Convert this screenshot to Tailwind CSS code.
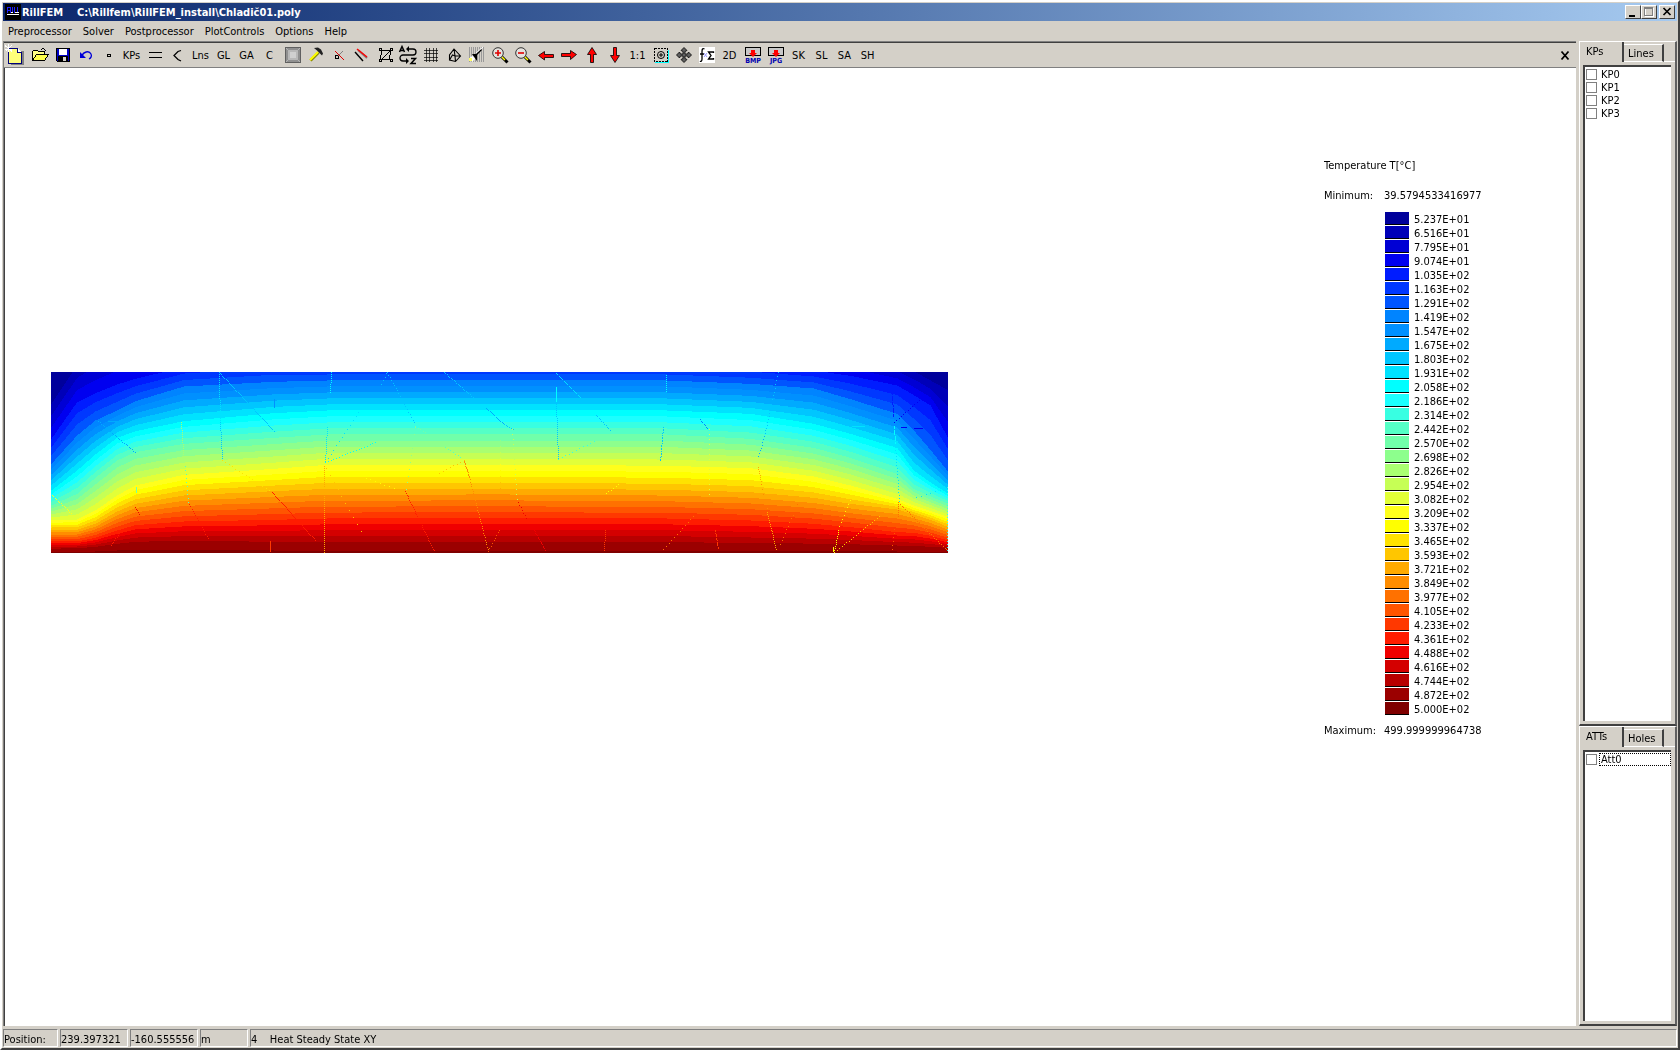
<!DOCTYPE html>
<html lang="en">
<head>
<meta charset="utf-8">
<title>RillFEM</title>
<script src="https://cdn.jsdelivr.net/npm/@tailwindcss/browser@4"></script>
</head>
<body class="h-screen overflow-hidden bg-[#d4d0c8] font-['DejaVu_Sans_Condensed','DejaVu_Sans',sans-serif] text-[11px] leading-[13px] text-black">
<div class="flex h-full flex-col border-2 border-t-white border-l-white border-r-[#404040] border-b-[#404040] p-px">

  <header class="flex h-[18px] shrink-0 items-center bg-linear-to-r from-[#0a246a] to-[#a6caf0] pr-[2px] pl-[2px] text-white">
    <svg class="h-4 w-4 shrink-0" viewBox="0 0 16 16" shape-rendering="crispEdges"><path fill="#000" d="M0 0h16v16H0z"/><path fill="none" stroke="#2020ff" d="M2.500 9V3.500h3V6h-3M5.500 6v3M7.500 3v6M9.500 3v6M12.500 3v6"/><path stroke="#fff" d="M2 10.500h12M6 8.500h2M10 8.500h4"/></svg>
    <h1 class="ml-px flex-1 font-bold whitespace-pre">RillFEM    C:\Rillfem\RillFEM_install\Chladič01.poly</h1>
    <div class="flex h-[14px]">
      <button aria-label="Minimize" class="w-4 border border-t-white border-l-white border-r-[#404040] border-b-[#404040] bg-[#d4d0c8]"><svg class="block h-3 w-[14px]" viewBox="0 0 14 12"><path d="M3 9h6v2H3z"/></svg></button>
      <button aria-label="Maximize" class="w-4 border border-t-white border-l-white border-r-[#404040] border-b-[#404040] bg-[#d4d0c8]"><svg class="block h-3 w-[14px]" viewBox="0 0 14 12" shape-rendering="crispEdges"><path fill="none" stroke="#fff" d="M3.500 2.500h8v8h-8z"/><path fill="none" stroke="#808080" d="M2.500 1.500h8v8h-8zM2 2.500h9"/></svg></button>
      <button aria-label="Close" class="ml-[2px] w-4 border border-t-white border-l-white border-r-[#404040] border-b-[#404040] bg-[#d4d0c8]"><svg class="block h-3 w-[14px]" viewBox="0 0 14 12"><path stroke="#000" stroke-width="1.700" d="M3.500 2l7 7M10.500 2l-7 7"/></svg></button>
    </div>
  </header>

  <nav class="flex h-5 shrink-0 items-center gap-[11px] pl-[5px]">
    <button>Preprocessor</button><button>Solver</button><button>Postprocessor</button><button>PlotControls</button><button>Options</button><button>Help</button>
  </nav>

  <div class="flex min-h-0 flex-1">
    <main class="flex min-w-0 flex-1 flex-col border-t border-l border-t-[#808080] border-l-[#808080] bg-white">
      <div class="flex h-[26px] shrink-0 items-center border-t border-b border-t-[#404040] border-b-[#808080] bg-[#d4d0c8] pl-px [&>button]:flex [&>button]:h-[23px] [&>button]:w-[23px] [&>button]:shrink-0 [&>button]:items-center [&>button]:justify-center [&_svg]:h-5 [&_svg]:w-5 [&_svg]:shrink-0 [&_svg]:overflow-visible">
        <button aria-label="New"><svg viewBox="0 0 20 20" shape-rendering="crispEdges"><path fill="#808080" d="M4 6h13v14H4z"/><path fill="#ffff7a" stroke="#00007b" d="M1.500 3.500h9l4 4v11h-13z"/><path fill="#fff" stroke="#00007b" d="M10.500 3.500v4h4"/><path stroke="#fff" d="M-2 .5l7 6M1.500-1v8M-2 4.500h7M5 0l-6 6"/></svg></button>
        <button aria-label="Open"><svg viewBox="0 0 20 20" shape-rendering="crispEdges"><path fill="#ffff84" stroke="#000" d="M2.500 15.500v-9l1-1h4l1 1h6v3"/><path fill="#ffff4a" stroke="#000" d="M2.500 15.500l4-6h12l-4 6z"/><path fill="none" stroke="#000" d="M11 4.500l2-1 3 2"/></svg></button>
        <button aria-label="Save"><svg viewBox="0 0 20 20" shape-rendering="crispEdges"><path fill="#0000c8" stroke="#000" d="M3.500 3.500h13v13h-12l-1-1z"/><path fill="#fff" d="M6 4h8v6H6z"/><path fill="#000" d="M5 11h10v5H5z"/><path fill="#d4d0c8" d="M10 12h3v4h-3z"/></svg></button>
        <button aria-label="Undo"><svg viewBox="0 0 20 20"><path fill="none" stroke="#0000d8" stroke-width="1.300" d="M6 11c1-4 7-6 9-2 1 2 0 4-2 5"/><path fill="#0000d8" d="M4 7v6h6z"/></svg></button>
        <button aria-label="Keypoint"><svg viewBox="0 0 20 20" shape-rendering="crispEdges"><path fill="none" stroke="#000" d="M8.500 9.500h3v2h-3z"/></svg></button>
        <button>KPs</button>
        <button aria-label="Parallel lines"><svg viewBox="0 0 20 20" shape-rendering="crispEdges"><path stroke="#000" d="M4 7.500h13M4 12.500h13"/></svg></button>
        <button aria-label="Angle"><svg viewBox="0 0 20 20"><path fill="none" stroke="#000" stroke-width="1.300" d="M13 5.500l-3 1-4 4 4 4 3 1.500"/></svg></button>
        <button>Lns</button>
        <button>GL</button>
        <button>GA</button>
        <button>C</button>
        <button aria-label="Area"><svg viewBox="0 0 20 20" shape-rendering="crispEdges"><path fill="#606060" d="M2 2h16v16H2z"/><path fill="#909090" d="M3 3h14v14H3z"/><path fill="#b8b8b8" d="M5 5h10v10H5z"/><path fill="#d0d0d0" d="M7 7h6v6H7z"/><path stroke="#b4b4b4" d="M3 3l3 3M17 3l-3 3M3 17l3-3M17 17l-3-3"/></svg></button>
        <button aria-label="Build"><svg viewBox="0 0 20 20"><path stroke="#888800" stroke-width="3" d="M4.500 15.500l8-8"/><path stroke="#ff0" stroke-width="2" d="M4 15l8-8"/><path fill="#222" d="M8 3l4-.5 3 2 2 4-1 2-3-3-2-2z"/></svg></button>
        <button aria-label="Delete keypoint"><svg viewBox="0 0 20 20"><path fill="none" stroke="#000" shape-rendering="crispEdges" d="M6.500 10.500h3v3h-3z"/><path stroke="#e00000" d="M6 6l9 9"/><path stroke="#808080" d="M14 6l-5 5"/></svg></button>
        <button aria-label="Delete line"><svg viewBox="0 0 20 20"><path stroke="#808080" stroke-width="2" d="M6 5l9 8"/><path stroke="#f00" stroke-width="1.500" d="M5 4l10 8"/><path stroke="#000" stroke-width="1.400" d="M3 7l8 9"/></svg></button>
        <button aria-label="Polygon"><svg viewBox="0 0 20 20" shape-rendering="crispEdges"><path fill="none" stroke="#000" d="M6.500 5.500h9l-1 9h-9zM6 15l9-9"/><path fill="#d4d0c8" stroke="#000" d="M4.500 3.500h2v2h-2zM15.500 3.500h2v2h-2zM4.500 14.500h2v2h-2zM15.500 14.500h2v2h-2z"/></svg></button>
        <button aria-label="Renumber"><svg viewBox="0 0 20 20"><path fill="none" stroke="#000" stroke-width="1.300" d="M9 4h6a3 3 0 0 1 0 6H5a2.500 2.500 0 0 0 0 6h5"/><path d="M8 4l3-3v6zM11 16l-3-3v6z"/><path fill="none" stroke="#000" stroke-width="1.500" d="M1.500 7L4 1.500 6.500 7M2 5.500h4M13 13.500h4.500L13 18.500h5"/></svg></button>
        <button aria-label="Grid"><svg viewBox="0 0 20 20"><path stroke="#000" stroke-width=".7" d="M5.500 3v14M8.500 3v14M12.500 3v14M15.500 3v14M3 5.500h14M3 8.500h14M3 12.500h14M3 15.500h14"/></svg></button>
        <button aria-label="Mesh"><svg viewBox="0 0 20 20"><path fill="none" stroke="#000" stroke-width="1.100" d="M10 4l-4.500 6v5l6 1.500L16.500 11zM10 4l1 7M5.500 15l3-5 2.500 1 5 0M11 11l.5 5.500"/></svg></button>
        <button aria-label="Clear plot"><svg viewBox="0 0 20 20"><path fill="none" stroke="#999" stroke-width="15" stroke-dasharray="1 1" d="M2 9.500h15"/><path d="M5 9h4l5-5 1 1-5 5v6z"/><path fill="#fff" d="M3 12l3-1 2 3-3 3z"/><path fill="#ff6" d="M2 13h3v3H2z"/><path stroke="#fff" d="M9 8l7-6"/></svg></button>
        <button aria-label="Zoom in"><svg viewBox="0 0 20 20"><path stroke="#000" stroke-width="3" d="M12 12l5.500 5.500"/><path stroke="#ff0" stroke-width="1.500" d="M12 12l3 3"/><circle cx="8" cy="8" r="5.300" fill="#e4e2de" stroke="#333"/><path stroke="#e00000" stroke-width="1.600" d="M5 8h6M8 5v6"/></svg></button>
        <button aria-label="Zoom out"><svg viewBox="0 0 20 20"><path stroke="#000" stroke-width="3" d="M12 12l5.500 5.500"/><path stroke="#ff0" stroke-width="1.500" d="M12 12l3 3"/><circle cx="8" cy="8" r="5.300" fill="#e4e2de" stroke="#333"/><path stroke="#e00000" stroke-width="1.600" d="M5 8h6"/></svg></button>
        <button aria-label="Pan left"><svg viewBox="0 0 20 20"><path fill="#f00" stroke="#000" stroke-width=".8" d="M2.500 10.500l6-4v3h9v3h-9v2.500z"/></svg></button>
        <button aria-label="Pan right"><svg viewBox="0 0 20 20"><path fill="#f00" stroke="#000" stroke-width=".8" d="M17.500 9.500l-6-4v3h-9v3h9v3z"/></svg></button>
        <button aria-label="Pan up"><svg viewBox="0 0 20 20"><path fill="#f00" stroke="#000" stroke-width=".8" d="M10 2.500l4.500 7h-3v8h-3v-8h-3z"/></svg></button>
        <button aria-label="Pan down"><svg viewBox="0 0 20 20"><path fill="#f00" stroke="#000" stroke-width=".8" d="M10 17.500l4.500-7h-3v-8h-3v8h-3z"/></svg></button>
        <button>1:1</button>
        <button aria-label="Fit"><svg viewBox="0 0 20 20"><path fill="none" stroke="#0ff" shape-rendering="crispEdges" d="M4 17.500h13.500V5"/><path fill="none" stroke="#000" stroke-dasharray="2 1" shape-rendering="crispEdges" d="M3.500 3.500h13v13h-13z"/><circle cx="10" cy="10" r="3.500" fill="none" stroke="#000"/><path stroke="#000" d="M8 10h4M10 8v4"/></svg></button>
        <button aria-label="Move"><svg viewBox="0 0 20 20"><path fill="#606060" stroke="#000" stroke-width=".8" d="M10 2.500l3 3-2 1v2.500h2.500l1-2 3 3-3 3-1-2H11v2.500l2 1-3 3-3-3 2-1V11H6.500l-1 2-3-3 3-3 1 2H9V6.500l-2-1z"/></svg></button>
        <button aria-label="Functions"><svg viewBox="0 0 20 20"><path fill="#fff" d="M2 2h16v16H2z"/><path fill="none" stroke="#000" stroke-width="1.300" d="M7.500 4c-2-1-2.500 0-2.500 3v7c0 2-1 3-2 2M3 9h4M16.500 8V7H11.500l2.500 3.500-2.500 3.500h5V13"/><path stroke="#99f" d="M7 8l3 4M10 8l-3 4"/></svg></button>
        <button>2D</button>
        <button aria-label="Export BMP"><svg viewBox="0 0 20 20"><path fill="#c8c8c8" stroke="#000" shape-rendering="crispEdges" d="M2.500 2.500h15v8h-15z"/><path fill="#f00" d="M8 5h4v3h2l-4 4-4-4h2z"/><text x="10" y="18" text-anchor="middle" font-size="7" font-weight="bold" fill="#0000b0">BMP</text></svg></button>
        <button aria-label="Export JPG"><svg viewBox="0 0 20 20"><path fill="#c8c8c8" stroke="#000" shape-rendering="crispEdges" d="M2.500 2.500h15v8h-15z"/><path fill="#f00" d="M8 5h4v3h2l-4 4-4-4h2z"/><text x="10" y="18" text-anchor="middle" font-size="7" font-weight="bold" fill="#0000b0">JPG</text></svg></button>
        <button>SK</button>
        <button>SL</button>
        <button>SA</button>
        <button>SH</button>
        <span class="flex-1"></span>
        <button aria-label="Close toolbar"><svg viewBox="0 0 20 20"><path stroke="#000" stroke-width="1.800" d="M6.500 6.500l7 8M13.500 6.500l-7 8"/></svg></button>
      </div>

      <section class="flex min-h-0 flex-1 items-start border-l border-l-[#404040] pl-[46px]">
        <canvas id="plot" width="897" height="181" class="mt-[304px] shrink-0" role="img" aria-label="Temperature field"></canvas>
        <div class="mt-[91px] ml-auto w-[252px] shrink-0">
          <p>Temperature T[°C]</p>
          <p class="mt-[17px] flex"><span class="w-[60px]">Minimum:</span><span>39.5794533416977</span></p>
          <ul id="legend" class="mt-[10px] ml-[61px]"></ul>
          <p class="mt-2 flex"><span class="w-[60px]">Maximum:</span><span>499.999999964738</span></p>
        </div>
      </section>
    </main>

    <aside class="ml-[3px] flex w-[98px] shrink-0 flex-col">
      <div class="flex min-h-0 flex-1 flex-col border-t border-l border-t-white border-l-white border-r-2 border-b-2 border-r-[#606060] border-b-[#404040]">
        <div class="flex h-5 shrink-0 items-end pl-px" role="tablist">
          <button role="tab" class="h-5 w-[43px] border-r-2 border-r-[#404040] pb-[2px] pl-[5px] text-left">KPs</button>
          <button role="tab" class="h-[18px] w-10 border-t border-r-2 border-b border-t-white border-r-[#404040] border-b-white pl-1 text-left">Lines</button>
          <span class="flex-1 self-end border-b border-b-white"></span>
        </div>
        <div class="mr-[4px] ml-[3px] mt-[3px] mb-[3px] flex-1 border-t-2 border-l-2 border-t-[#404040] border-l-[#404040] bg-white pt-px pl-px">
          <label class="flex h-[13px] items-center gap-1"><input type="checkbox" class="h-[11px] w-[11px] appearance-none border border-[#808080] bg-white">KP0</label>
          <label class="flex h-[13px] items-center gap-1"><input type="checkbox" class="h-[11px] w-[11px] appearance-none border border-[#808080] bg-white">KP1</label>
          <label class="flex h-[13px] items-center gap-1"><input type="checkbox" class="h-[11px] w-[11px] appearance-none border border-[#808080] bg-white">KP2</label>
          <label class="flex h-[13px] items-center gap-1"><input type="checkbox" class="h-[11px] w-[11px] appearance-none border border-[#808080] bg-white">KP3</label>
        </div>
      </div>
      <div class="flex h-[300px] shrink-0 flex-col border-t border-l border-t-white border-l-white border-r-2 border-b-2 border-r-[#606060] border-b-[#404040]">
        <div class="flex h-5 shrink-0 items-end pl-px" role="tablist">
          <button role="tab" class="h-5 w-[43px] border-r-2 border-r-[#404040] pb-[2px] pl-[5px] text-left">ATTs</button>
          <button role="tab" class="h-[18px] w-10 border-t border-r-2 border-b border-t-white border-r-[#404040] border-b-white pl-1 text-left">Holes</button>
          <span class="flex-1 self-end border-b border-b-white"></span>
        </div>
        <div class="mr-[4px] ml-[3px] mt-[3px] mb-[3px] flex-1 border-t-2 border-l-2 border-t-[#404040] border-l-[#404040] bg-white pt-px pl-px">
          <label class="flex h-[13px] items-center gap-[2px]"><input type="checkbox" class="h-[11px] w-[11px] appearance-none border border-[#808080] bg-white"><span class="flex h-[13px] flex-1 items-center border border-dotted border-black pl-px">Att0</span></label>
        </div>
      </div>
    </aside>
  </div>

  <footer class="mt-[2px] flex h-[19px] shrink-0 gap-[2px] pt-px [&>span]:border [&>span]:border-t-[#808080] [&>span]:border-r-white [&>span]:border-b-white [&>span]:border-l-[#808080] [&>span]:pt-[3px] [&>span]:whitespace-pre">
    <span class="w-[55px]">Position:</span><span class="w-[68px]">239.397321</span><span class="w-[68px]">-160.555556</span><span class="w-[48px]">m</span><span class="flex-1">4    Heat Steady State XY</span>
  </footer>
</div>

<script>
const COLORS = ['#00009b','#0000b8','#0000d4','#0000f0','#001cff','#0038ff','#0055ff','#0084ff','#0090ff','#00aaff','#00c6ff','#00e2ff','#00ffff','#1cffff','#38ffe2','#55ffc6','#71ffaa','#8dff8d','#aaff71','#c6ff55','#e2ff38','#ffff1c','#ffff00','#ffe200','#ffc600','#ffaa00','#ff8d00','#ff7100','#ff5500','#ff3800','#ff1c00','#f00000','#d40000','#b80000','#9b0000','#9b0000','#7f0000'];
const LABELS = ['5.237E+01','6.516E+01','7.795E+01','9.074E+01','1.035E+02','1.163E+02','1.291E+02','1.419E+02','1.547E+02','1.675E+02','1.803E+02','1.931E+02','2.058E+02','2.186E+02','2.314E+02','2.442E+02','2.570E+02','2.698E+02','2.826E+02','2.954E+02','3.082E+02','3.209E+02','3.337E+02','3.465E+02','3.593E+02','3.721E+02','3.849E+02','3.977E+02','4.105E+02','4.233E+02','4.361E+02','4.488E+02','4.616E+02','4.744E+02','4.872E+02','5.000E+02'];
// The field paints the second-darkest red twice; the legend lists it once.
const LEGEND = COLORS.filter((c, i) => i !== 35);
document.getElementById('legend').innerHTML = LABELS.map((t, i) =>
  `<li class="flex h-[14px] items-start"><span class="h-[13px] w-6 border-b border-b-black" style="background:${LEGEND[i]}"></span><span class="ml-[5px] pt-px">${t}</span></li>`).join('');

// Isotherm heights (third-pixels) at chosen stations along the section.
const LEVELS = [1, 4, 7, 12, 16, 21, 25, 30, 35, 37];
const STATIONS = [
  [0, 94,199,274,354,399,444,472,507,534,546],
  [77, -21,89,189,294,364,441,472,507,532,545],
  [132, -56,62,144,246,316,414,454,496,530,544],
  [197, -86,36,114,196,264,369,417,474,524,544],
  [252, -106,19,86,176,239,339,394,458,520,544],
  [397, -96,-16,42,146,214,307,369,447,520,544],
  [667, -106,-36,28,122,196,289,356,442,524,544],
  [827, -86,-30,24,114,186,277,349,438,526,545],
  [1347, -86,-30,24,114,186,276,348,437,526,545],
  [1847, -86,-30,24,114,186,280,352,438,526,545],
  [2097, -86,-21,34,124,199,287,359,444,529,545],
  [2287, -76,-6,48,154,226,312,376,454,528,545],
  [2397, -56,10,80,184,256,339,394,464,528,545],
  [2537, -26,39,124,226,304,379,411,479,529,545],
  [2587, -4,68,174,294,349,399,426,481,530,545],
  [2637, 24,99,232,330,372,415,442,490,531,545],
  [2691, 54,199,299,364,394,434,464,504,532,545]
];
const cv = document.getElementById('plot'), g = cv.getContext('2d');
for (let x = 0; x < cv.width; x++) {
  let s = 0;
  while (s < STATIONS.length - 2 && STATIONS[s + 1][0] < x * 3) s++;
  const a = STATIONS[s], b = STATIONS[s + 1], t = (x * 3 - a[0]) / (b[0] - a[0]);
  const ys = LEVELS.map((_, i) => (a[i + 1] + (b[i + 1] - a[i + 1]) * t) / 3);
  for (let y = 0; y < cv.height; y++) {
    let j = 0;
    while (j < ys.length - 2 && ys[j + 1] < y) j++;
    const v = LEVELS[j] + (y - ys[j]) / (ys[j + 1] - ys[j]) * (LEVELS[j + 1] - LEVELS[j]);
    g.fillStyle = COLORS[Math.max(0, Math.min(36, Math.floor(v)))];
    g.fillRect(x, y, 1, 1);
  }
}
// Element-edge traces: x1, y1, x2, y2, colour index, spacing.
[[168,0,223,59,10,1.6],[168,2,169,50,11,2],[169,50,171,86,10,2],[280,0,279,20,12,2],[276,55,274,90,11,2],[274,90,310,36,11,5],[274,90,325,70,12,3],[330,12,336,0,10,4],[336,0,364,52,10,3],[393,0,423,26,10,1.8],[435,36,453,52,9,1.6],[453,52,463,58,10,2],[47,49,85,81,9,2],[57,49,68,49,9,1],[130,50,133,90,18,2],[134,94,137,130,15,4],[138,132,158,168,30,2.6],[85,115,85,120,16,1],[84,135,88,142,31,2],[221,120,264,168,30,1.6],[219,169,219,179,29,1],[223,27,223,35,8,1],[273,94,273,115,25,2],[273,124,273,180,25,2],[171,88,221,120,23,4],[275,96,310,160,24,8],[310,104,345,117,22,5],[364,54,383,66,16,3],[364,55,355,120,17,7],[354,119,383,179,30,2],[413,89,418,105,26,1.2],[418,105,437,179,26,2.4],[437,179,449,156,28,3],[394,75,411,86,15,3],[413,88,385,102,24,4],[60,173,70,158,30,2],[1,123,20,141,21,2],
[505,1,530,26,11,1.8],[505,15,505,30,12,1],[505,30,507,86,10,2],[545,43,560,59,10,2],[461,57,466,130,19,5],[467,130,476,148,31,3],[483,158,494,178,31,1.5],[615,3,615,19,12,2],[612,55,609,90,10,1.6],[507,87,545,68,14,4],[658,57,658,125,20,5],[649,47,657,57,7,2],[727,0,721,28,10,4],[719,38,713,64,10,3],[713,64,707,86,9,3],[707,95,710,110,25,2],[710,112,717,140,26,5],[716,140,725,178,25,2],[729,172,747,130,27,4],[555,121,569,111,22,3],[554,158,553,178,29,2],[642,144,611,178,27,4],[664,158,667,177,29,1.3],[841,20,842,45,4,1.2],[843,54,844,72,12,1.2],[844,72,848,129,11,3],[850,55,855,55,3,1],[863,56,871,56,3,1],[843,50,868,28,3,3],[801,54,813,54,11,1],[849,132,896,178,27,2.4],[847,130,847,145,27,2],[843,157,841,178,28,4],[828,144,786,178,24,3],[799,128,786,160,22,4],[787,160,783,180,22,2],[782,175,782,179,22,1],[896,115,896,180,14,3],[865,125,896,116,11,5]
].forEach(([x1, y1, x2, y2, c, step]) => {
  const n = Math.hypot(x2 - x1, y2 - y1) / step;
  g.fillStyle = COLORS[c];
  for (let i = 0; i <= n; i++) g.fillRect(Math.round(x1 + (x2 - x1) * i / n), Math.round(y1 + (y2 - y1) * i / n), 1, 1);
});
</script>
</body>
</html>
